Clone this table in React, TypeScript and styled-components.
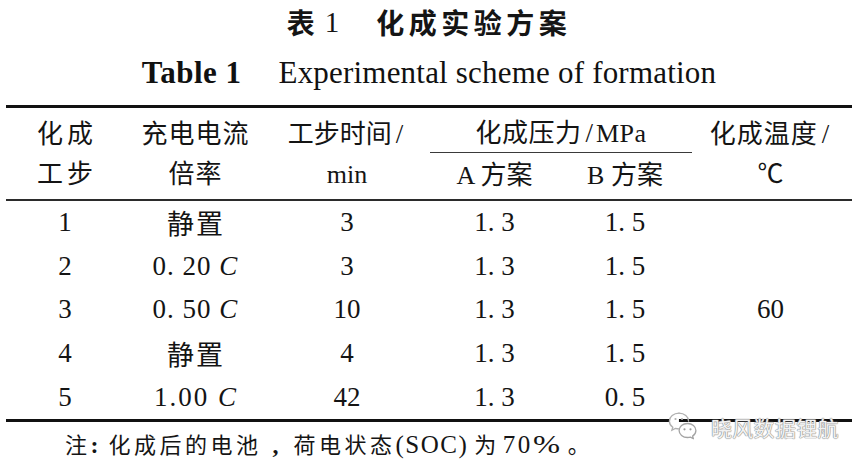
import React from "react";
import styled, { createGlobalStyle } from "styled-components";

const GlobalStyle = createGlobalStyle`
  html, body { margin: 0; padding: 0; background: #ffffff; }
  body { width: 864px; height: 468px; overflow: hidden; }
`;

const SERIF = `"Liberation Serif", "Noto Sans CJK SC", serif`;
const SANS_CJK = `"Noto Sans CJK SC", "Noto Sans", sans-serif`;
const COLS = "118px 142px 162px 133px 128px 163px";

const Page = styled.div`
  position: relative;
  width: 864px;
  height: 468px;
  box-sizing: border-box;
  padding-left: 6px;
  color: #141414;
  font-family: ${SERIF};
`;

const Frame = styled.div`
  width: 846px;
  display: flex;
  flex-direction: column;
`;

const Title = styled.h1`
  margin: 0;
  height: 44px;
  line-height: 44px;
  display: flex;
  justify-content: center;
  align-items: center;
  font-family: ${SANS_CJK};
  font-size: 28px;
  font-weight: 700;
  color: #151515;
`;

const TitleNum = styled.span`
  font-family: "Liberation Serif", serif;
  font-weight: 400;
  font-size: 29px;
  margin-left: 10px;
`;

const TitleText = styled.span`
  margin-left: 37px;
  letter-spacing: 4.5px;
`;

const EnTitle = styled.h2`
  margin: 9px 0 0;
  height: 40px;
  line-height: 40px;
  display: flex;
  justify-content: center;
  font-family: "Liberation Serif", serif;
  font-size: 31px;
  color: #111;
`;

const EnBold = styled.span`
  font-weight: 700;
  letter-spacing: 0.5px;
`;

const EnText = styled.span`
  font-weight: 400;
  margin-left: 37px;
  letter-spacing: 0.2px;
`;

const HeadGrid = styled.div`
  margin-top: 12px;
  display: grid;
  grid-template-columns: ${COLS};
  grid-template-rows: 45px 46px;
  border-top: 3px solid #111;
  border-bottom: 2px solid #2b2b2b;
`;

const HeadCell = styled.div<{ $col: number; $ls?: number }>`
  grid-column: ${(p) => p.$col};
  grid-row: 1 / span 2;
  display: flex;
  flex-direction: column;
  align-items: center;
  justify-content: center;
  padding-top: 2px;
  padding-left: ${(p) => p.$ls ?? 0}px;
  font-size: 26px;
  line-height: 40px;
  letter-spacing: ${(p) => p.$ls ?? 0}px;
  white-space: nowrap;
`;

const GroupCell = styled.div`
  grid-column: 4 / span 2;
  grid-row: 1;
  margin: 0 -3px 0 2px;
  padding-top: 7px;
  box-sizing: border-box;
  text-align: center;
  font-size: 26px;
  line-height: 36px;
  letter-spacing: 0.5px;
  border-bottom: 1.5px solid #3a3a3a;
  white-space: nowrap;
`;

const SubCell = styled.div<{ $col: number }>`
  grid-column: ${(p) => p.$col};
  grid-row: 2;
  text-align: center;
  font-size: 26px;
  line-height: 46px;
  white-space: pre;
`;

const Slash = styled.span`
  font-family: "Liberation Serif", serif;
  font-size: 27px;
  margin: 0 3px 0 4px;
  letter-spacing: 0;
`;

const BodyGrid = styled.div`
  display: grid;
  grid-template-columns: ${COLS};
  grid-template-rows: repeat(5, 43.6px);
  border-bottom: 3px solid #111;
`;

const Cell = styled.div<{ $row: number; $col: number; $ls?: number }>`
  grid-row: ${(p) => p.$row};
  grid-column: ${(p) => p.$col};
  display: flex;
  align-items: center;
  justify-content: center;
  padding-left: ${(p) => p.$ls ?? 0}px;
  font-size: 27px;
  letter-spacing: ${(p) => p.$ls ?? 0}px;
  white-space: pre;
`;

const SpanCell = styled.div`
  grid-row: 1 / span 5;
  grid-column: 6;
  display: flex;
  align-items: center;
  justify-content: center;
  font-size: 27px;
`;

const Ital = styled.i`
  font-style: italic;
`;

const Note = styled.p`
  margin: 8px 0 0;
  padding-left: 59px;
  line-height: 30px;
  font-size: 22px;
  letter-spacing: 3.5px;
  white-space: pre;
  color: #151515;
`;

const Punct = styled.span<{ $w: number; $pl?: number }>`
  display: inline-block;
  box-sizing: border-box;
  width: ${(p) => p.$w}px;
  padding-left: ${(p) => p.$pl ?? 0}px;
  font-family: "Liberation Serif", serif;
  font-size: 24px;
  font-weight: 700;
  letter-spacing: 0;
`;

const Latin = styled.span<{ $ls: number; $mr?: number; $ml?: number }>`
  font-size: 25px;
  letter-spacing: ${(p) => p.$ls}px;
  margin-left: ${(p) => p.$ml ?? 0}px;
  margin-right: ${(p) => p.$mr ?? 0}px;
`;

const Percent = styled.span`
  display: inline-block;
  font-size: 25px;
  letter-spacing: 0;
  transform: scaleX(1.3);
  transform-origin: left center;
  margin-right: 14px;
`;

const Watermark = styled.div`
  position: absolute;
  left: 668px;
  top: 411px;
  display: flex;
  align-items: center;
  gap: 13px;
`;

const WmText = styled.span`
  font-family: ${SANS_CJK};
  font-size: 21px;
  line-height: 28px;
  letter-spacing: 0.3px;
  color: #f2f2f2;
  text-shadow: 0 0 1px #8a8a8a, 0 0 1px #8a8a8a, 0 0 1px #9a9a9a;
`;

const WeChatIcon = () => (
  <svg width="30" height="32" viewBox="0 0 30 32" fill="none">
    <path
      d="M11 2.2C5.6 2.2 1.4 5.8 1.4 10.2c0 2.5 1.3 4.6 3.4 6.1l-0.9 2.9 3.4-1.8c1.1 0.3 2.300 0.5 3.6 0.5"
      stroke="#b0b0b0"
      strokeWidth="1.3"
      fill="#ffffff"
      strokeLinecap="round"
    />
    <path d="M11 2.2c5.4 0 9.6 3.6 9.6 8" stroke="#b0b0b0" strokeWidth="1.3" strokeLinecap="round" />
    <circle cx="7.5" cy="8" r="1.1" fill="#b0b0b0" />
    <circle cx="14" cy="8" r="1.1" fill="#b0b0b0" />
    <path
      d="M19.5 12.5c-4.7 0-8.4 3.1-8.4 7s3.7 7 8.4 7c1 0 2-0.1 2.9-0.4l3 1.6-0.8-2.6c2-1.3 3.3-3.3 3.3-5.6 0-3.9-3.7-7-8.4-7z"
      stroke="#a4a4a4"
      strokeWidth="1.3"
      fill="#ffffff"
      strokeLinejoin="round"
    />
    <circle cx="16.5" cy="18.3" r="1.1" fill="#9c9c9c" />
    <circle cx="22.5" cy="18.3" r="1.1" fill="#9c9c9c" />
  </svg>
);

type Row = { step: string; rate: React.ReactNode; rateLs?: number; time: string; a: string; b: string };

const rows: Row[] = [
  { step: "1", rate: "静置", rateLs: 2, time: "3", a: "1. 3", b: "1. 5" },
  { step: "2", rate: <>0. 20 <Ital>C</Ital></>, rateLs: 1, time: "3", a: "1. 3", b: "1. 5" },
  { step: "3", rate: <>0. 50 <Ital>C</Ital></>, rateLs: 1, time: "10", a: "1. 3", b: "1. 5" },
  { step: "4", rate: "静置", rateLs: 2, time: "4", a: "1. 3", b: "1. 5" },
  { step: "5", rate: <>1.00 <Ital>C</Ital></>, rateLs: 2, time: "42", a: "1. 3", b: "0. 5" },
];

export default function App() {
  return (
    <>
      <GlobalStyle />
      <Page>
        <Frame>
          <Title>
            <span>表</span>
            <TitleNum>1</TitleNum>
            <TitleText>化成实验方案</TitleText>
          </Title>
          <EnTitle>
            <EnBold>Table 1</EnBold>
            <EnText>Experimental scheme of formation</EnText>
          </EnTitle>

          <HeadGrid>
            <HeadCell $col={1} $ls={4}>
              <span>化成</span>
              <span>工步</span>
            </HeadCell>
            <HeadCell $col={2} $ls={1}>
              <span>充电电流</span>
              <span>倍率</span>
            </HeadCell>
            <HeadCell $col={3}>
              <span>
                工步时间<Slash>/</Slash>
              </span>
              <span>min</span>
            </HeadCell>
            <GroupCell>
              化成压力<Slash>/</Slash>MPa
            </GroupCell>
            <SubCell $col={4}>A 方案</SubCell>
            <SubCell $col={5}>B 方案</SubCell>
            <HeadCell $col={6} $ls={1}>
              <span>
                化成温度<Slash>/</Slash>
              </span>
              <span>℃</span>
            </HeadCell>
          </HeadGrid>

          <BodyGrid>
            {rows.map((r, i) => (
              <React.Fragment key={r.step}>
                <Cell $row={i + 1} $col={1}>{r.step}</Cell>
                <Cell $row={i + 1} $col={2} $ls={r.rateLs}>{r.rate}</Cell>
                <Cell $row={i + 1} $col={3}>{r.time}</Cell>
                <Cell $row={i + 1} $col={4}>{r.a}</Cell>
                <Cell $row={i + 1} $col={5}>{r.b}</Cell>
              </React.Fragment>
            ))}
            <SpanCell>60</SpanCell>
          </BodyGrid>

          <Note>
            注<Punct $w={18}>:</Punct>化成后的电池<Punct $w={32} $pl={11}>,</Punct>荷电状态
            <Latin $ls={1.5} $mr={6}>(SOC)</Latin>为<Latin $ls={2.5} $ml={3}>70</Latin>
            <Percent>%</Percent>。
          </Note>
        </Frame>

        <Watermark>
          <WeChatIcon />
          <WmText>晓风数据锂航</WmText>
        </Watermark>
      </Page>
    </>
  );
}
